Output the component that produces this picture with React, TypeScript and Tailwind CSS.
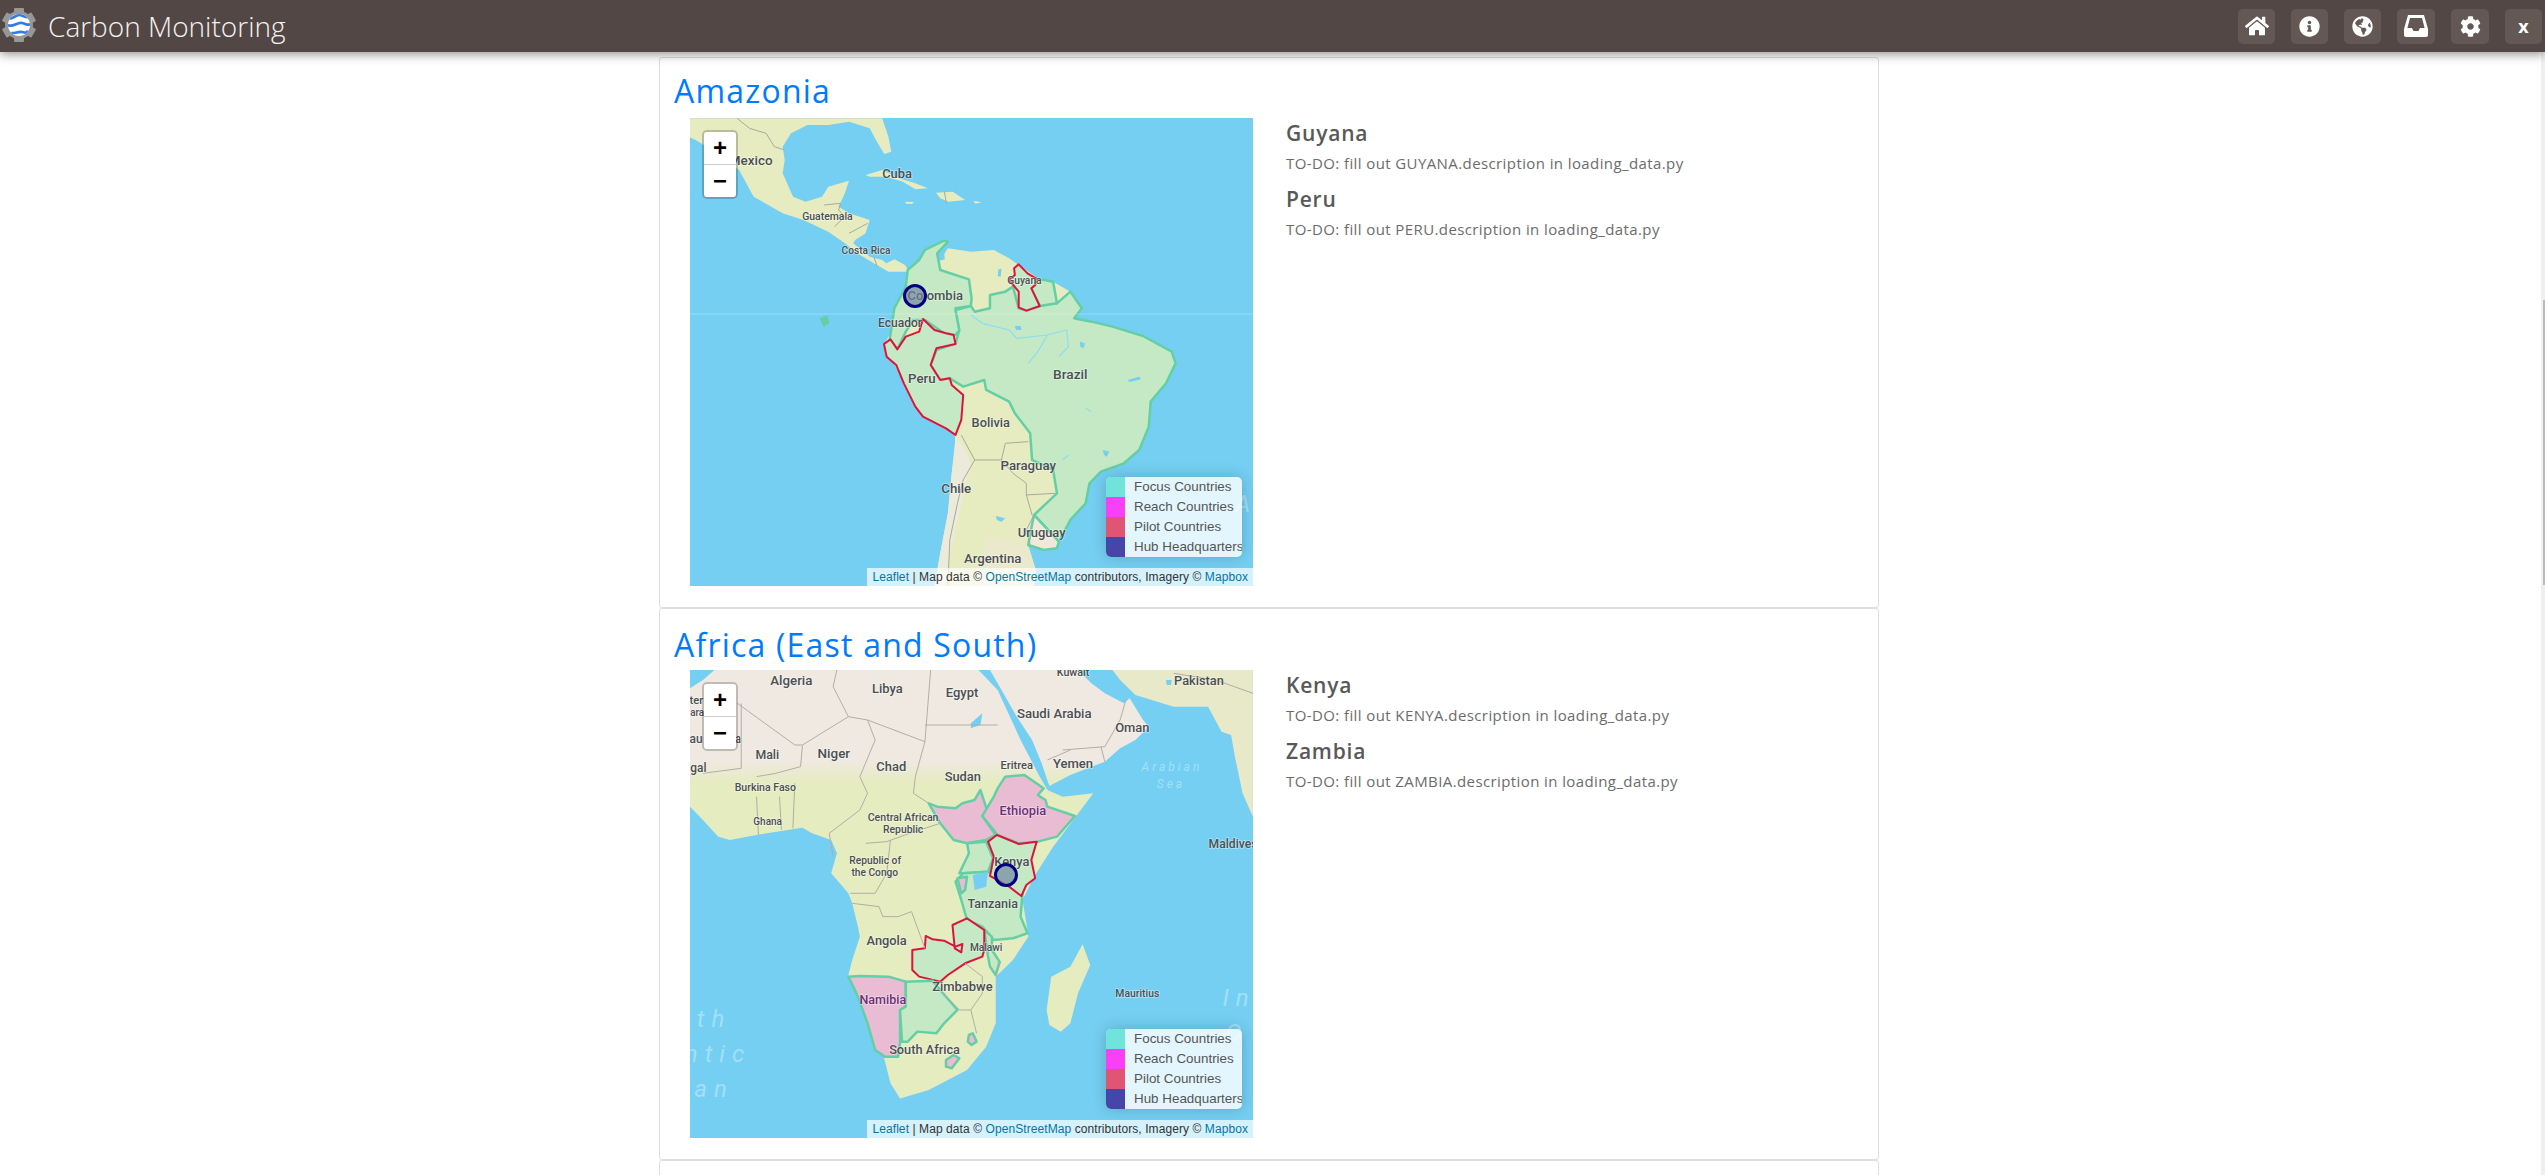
import { FaCog, FaGlobeAmericas, FaHome, FaInfoCircle } from "react-icons/fa";
import type { ReactNode } from "react";

const WATER = "#74cff3";
const GREEN = "#c4e9c4";
const TEAL = "#64cfa5";
const PINK = "#e9bcd4";
const RED = "#dc143c";

type Label = [string, number, number, number, number?];
type Shape = { points: string; fill?: string; stroke?: string; width?: number };

function Logo() {
  return (
    <svg width="36" height="36" viewBox="0 0 36 36" className="ml-px shrink-0">
      <defs>
        <clipPath id="globe">
          <circle cx="18" cy="17" r="11" />
        </clipPath>
      </defs>
      <g fill="#979797">
        <circle cx="18" cy="17" r="14" />
        {[0, 60, 120, 180, 240, 300].map((r) => (
          <rect key={r} x="13" y="0" width="10" height="8" rx="1" transform={`rotate(${r} 18 17)`} />
        ))}
      </g>
      <circle cx="18" cy="17" r="11" fill="#fff" />
      <g clipPath="url(#globe)" fill="none" stroke="#2f7de8" strokeWidth="2.8">
        <path d="M8 10c4 2 7-4 11-3s6 3 9 2" />
        <path d="M6 17c6 3 10-3 15-2s5 3 9 1" />
        <path d="M10 25c4 1 7-2 11-1s4 1 6-1" />
      </g>
    </svg>
  );
}

function InboxIcon() {
  return (
    <svg width="24" height="22" viewBox="0 0 24 22" fill="#fff">
      <path
        fillRule="evenodd"
        d="M4 0h16l4 14v6a2 2 0 0 1-2 2H2a2 2 0 0 1-2-2v-6L4 0Zm2 3L3.4 13H8l1.5 3h5l1.500-3h4.600L18 3H6Z"
      />
    </svg>
  );
}

function HeaderButton({ children, wide }: { children: ReactNode; wide?: boolean }) {
  return (
    <div
      className={`flex h-[35px] items-center justify-center rounded-[5px] bg-[#645855] text-white ${wide ? "w-[38px]" : "w-[37px]"}`}
    >
      {children}
    </div>
  );
}

function Header() {
  return (
    <header className="relative z-10 flex h-[52px] shrink-0 items-center justify-between bg-[#524745] pr-[3px] shadow-[0_2px_10px_rgba(0,0,0,0.45)]">
      <div className="flex items-center gap-[11px]">
        <Logo />
        <span className="text-[28px] leading-none font-light text-[#f4f2f1] [font-family:'Open_Sans',sans-serif]">
          Carbon Monitoring
        </span>
      </div>
      <div className="flex items-center gap-[16px]">
        <HeaderButton>
          <FaHome size={24} />
        </HeaderButton>
        <HeaderButton>
          <FaInfoCircle size={21} />
        </HeaderButton>
        <HeaderButton>
          <FaGlobeAmericas size={21} />
        </HeaderButton>
        <HeaderButton wide>
          <InboxIcon />
        </HeaderButton>
        <HeaderButton wide>
          <FaCog size={21} />
        </HeaderButton>
        <HeaderButton>
          <span className="text-[18px] font-bold [font-family:'Open_Sans',sans-serif]">x</span>
        </HeaderButton>
      </div>
    </header>
  );
}

function Shapes({ shapes, transform }: { shapes: Shape[]; transform: string }) {
  return (
    <g transform={transform}>
      {shapes.map((s, i) => (
        <polygon
          key={i}
          points={s.points}
          fill={s.fill ?? "none"}
          stroke={s.stroke ?? "none"}
          strokeWidth={s.width ?? 2}
          strokeLinejoin="round"
          vectorEffect="non-scaling-stroke"
        />
      ))}
    </g>
  );
}

function Lines({ lines, transform, color, width }: { lines: string[]; transform: string; color: string; width: number }) {
  return (
    <g transform={transform} fill="none" stroke={color} strokeWidth={width} strokeLinejoin="round">
      {lines.map((l, i) => (
        <polyline key={i} points={l} vectorEffect="non-scaling-stroke" />
      ))}
    </g>
  );
}

function Labels({
  labels,
  sx,
  ox,
  oy,
  color = "#4a4f53",
}: {
  labels: Label[];
  sx: number;
  ox: number;
  oy: number;
  color?: string;
}) {
  return (
    <g>
      {labels.map(([text, x, y, w, size], i) => (
        <text
          key={i}
          x={x * sx + ox}
          y={y / 3 + oy}
          textAnchor="middle"
          dominantBaseline="central"
          textLength={w * sx}
          lengthAdjust="spacingAndGlyphs"
          fontSize={size ?? 12}
          fill={color}
          stroke="rgba(255,255,255,0.45)"
          strokeWidth="1.5"
          className="font-medium [font-family:Roboto,sans-serif] [paint-order:stroke]"
        >
          {text}
        </text>
      ))}
    </g>
  );
}

function Faint({ children, x, y, size = 24, gap = "tracking-[7px]" }: { children: string; x: number; y: number; size?: number; gap?: string }) {
  return (
    <text
      x={x}
      y={y}
      textAnchor="middle"
      dominantBaseline="central"
      fontSize={size}
      fill="rgba(255,255,255,0.35)"
      className={`italic [font-family:Roboto,sans-serif] ${gap}`}
    >
      {children}
    </text>
  );
}

// zoom + / - and legend and attribution sit on top of the map
function MapOverlays() {
  const legend = [
    ["#70e4da", "Focus Countries"],
    ["#f940f7", "Reach Countries"],
    ["#e05474", "Pilot Countries"],
    ["#4646a8", "Hub Headquarters"],
  ];
  return (
    <>
      <div className="absolute top-[12px] left-[12px] flex w-[36px] flex-col overflow-hidden rounded-[5px] border-2 border-[rgba(0,0,0,0.2)] bg-clip-padding [font-family:'Liberation_Sans',sans-serif]">
        <div className="flex h-[33px] items-center justify-center border-b border-[#ccc] bg-white text-[24px] leading-none font-bold text-black">
          +
        </div>
        <div className="flex h-[32px] items-center justify-center bg-white text-[24px] leading-none font-bold text-black">
          −
        </div>
      </div>
      <div className="absolute right-[11px] bottom-[29px] w-[136px] overflow-hidden rounded-[5px] bg-[rgba(255,255,255,0.8)] text-[13.4px] leading-[20px] text-[#555] shadow-[0_0_15px_rgba(0,0,0,0.2)] [font-family:'Liberation_Sans',sans-serif]">
        {legend.map(([color, name]) => (
          <div key={name} className="flex h-[20px] items-center whitespace-nowrap">
            <span className="h-[20px] w-[19px] shrink-0" style={{ backgroundColor: color }} />
            <span className="ml-[9px]">{name}</span>
          </div>
        ))}
      </div>
      <div className="absolute right-0 bottom-0 h-[18px] whitespace-nowrap bg-[rgba(255,255,255,0.7)] px-[5px] text-[12px] leading-[18px] tracking-[0.08px] text-[#333] [font-family:'Liberation_Sans',sans-serif]">
        <span className="text-[#0078a8]">Leaflet</span> | Map data © <span className="text-[#0078a8]">OpenStreetMap</span>{" "}
        contributors, Imagery © <span className="text-[#0078a8]">Mapbox</span>
      </div>
    </>
  );
}

function Marker({ x, y }: { x: number; y: number }) {
  return <circle cx={x} cy={y} r="10.5" fill="#6e7fa0" fillOpacity="0.65" stroke="#000080" strokeWidth="3" />;
}

function AmazonMap() {
  const upper = "translate(-40 -68) scale(0.4146 0.3333)";
  const lower = "translate(-10 102) scale(0.3827 0.3333)";
  return (
    <svg viewBox="0 0 563 468" width="563" height="468" className="block">
      <rect width="563" height="468" fill={WATER} />
      <Shapes
        transform={upper}
        shapes={[
          {
            fill: "#e6ecc0",
            points:
              "96,205 560,205 575,260 582,305 565,312 545,270 530,235 480,215 430,225 380,225 340,250 320,290 325,330 320,370 345,440 375,455 415,440 430,410 480,392 470,430 455,470 480,490 530,510 520,550 495,570 490,580 530,620 560,630 570,640 590,628 615,645 625,665 575,665 540,640 500,610 470,580 430,545 370,510 320,490 250,440 215,360 150,300 110,270 96,262",
          },
          { fill: "#e6ecc0", points: "520,375 560,360 600,385 640,400 670,415 640,418 610,395 570,380 530,380" },
          { fill: "#e6ecc0", points: "690,428 730,425 760,450 720,455 700,445" },
          { fill: "#e6ecc0", points: "615,455 637,456 632,462 618,461" },
          { fill: "#e6ecc0", points: "780,452 800,457 785,461" },
        ]}
      />
      <Lines
        transform={upper}
        color="#a9a99a"
        width={1}
        lines={[
          "210,205 240,235 280,250 300,290 325,300",
          "420,465 460,460 455,480 470,500 445,530",
          "480,550 510,530 525,520",
          "540,620 548,650",
          "710,425 715,460",
        ]}
      />
      <Shapes
        transform={lower}
        shapes={[
          {
            fill: "#e6ecc0",
            points:
              "595,150 625,120 640,90 690,62 672,100 680,120 700,85 760,95 820,90 860,115 885,135 930,170 975,185 1020,215 1050,265 1030,295 1075,305 1130,320 1210,348 1285,395 1295,430 1270,490 1230,545 1225,620 1200,690 1160,730 1100,755 1070,790 1060,850 1020,900 990,965 985,985 950,990 910,975 930,1050 925,1098 665,1098 680,1000 700,880 710,760 720,680 718,645 700,620 640,590 615,560 585,480 550,415 535,370 550,340 560,260 590,200",
          },
          {
            fill: "#eceadb",
            points: "720,650 745,690 760,730 735,850 705,1000 690,1098 665,1098 680,1000 700,880 710,760",
          },
          { fill: "#ebe9cc", points: "800,950 900,960 930,1050 925,1098 780,1098" },
          { fill: WATER, points: "672,100 690,95 692,118 678,122" },
          {
            fill: GREEN,
            stroke: TEAL,
            width: 2.5,
            points:
              "595,150 625,120 640,90 690,62 700,65 672,100 680,150 755,178 762,235 760,258 720,265 730,330 720,345 690,340 640,300 610,300 590,335 568,388 548,358 560,265 590,200",
          },
          {
            fill: GREEN,
            stroke: TEAL,
            width: 2.5,
            points:
              "760,258 770,275 810,265 810,225 850,215 870,200 885,265 905,272 940,258 975,250 985,250 1020,215 1050,265 1030,295 1075,305 1130,320 1210,348 1285,395 1295,430 1270,490 1230,545 1225,620 1200,690 1160,730 1100,755 1070,790 1060,850 1020,900 990,965 925,885 985,820 975,750 920,720 915,640 875,580 860,545 800,510 795,480 740,500 705,475 680,480 655,435 670,390 720,370 730,330 720,270",
          },
          { fill: GREEN, stroke: TEAL, width: 2.5, points: "930,175 975,185 985,250 940,258 918,205 928,195" },
          {
            fill: "#f0e8d8",
            stroke: TEAL,
            width: 2.5,
            points: "925,885 990,965 985,985 950,990 910,975 918,925",
          },
          {
            fill: GREEN,
            stroke: RED,
            width: 2,
            points:
              "635,297 665,330 695,340 715,345 720,372 670,385 655,435 680,480 705,475 710,495 740,525 735,600 720,645 695,625 635,590 615,560 585,490 565,435 540,410 533,372 550,358 568,388 590,350 625,335",
          },
          {
            fill: GREEN,
            stroke: RED,
            width: 2,
            points: "885,133 908,160 930,175 928,195 918,205 940,258 905,272 885,262 885,215 860,180 875,165 873,145",
          },
          { fill: WATER, points: "832,148 840,146 838,170 830,168" },
          { fill: WATER, points: "1170,480 1200,470 1205,478 1175,486" },
          { fill: WATER, points: "1105,690 1122,695 1115,710 1108,705" },
          { fill: WATER, points: "825,888 850,895 840,905 828,900" },
          { fill: WATER, points: "1045,365 1058,370 1055,385 1046,380" },
          { fill: WATER, points: "875,318 890,318 892,330 878,330" },
          { fill: TEAL, points: "365,295 385,285 390,310 375,320" },
        ]}
      />
      <Lines
        transform={lower}
        color="#8fdcf2"
        width={1.2}
        lines={[
          "760,285 790,310 860,330 880,355 960,345 1010,330",
          "960,345 935,395 910,430",
          "1010,330 1015,380 990,410",
          "1060,565 1075,575",
          "1000,720 1015,705",
        ]}
      />
      <Lines
        transform={lower}
        color="#a9a99a"
        width={1}
        lines={[
          "735,645 770,720 740,780 725,850 705,960 700,1098",
          "770,720 840,720 850,670 910,665",
          "840,720 870,760 905,790 905,825 980,820",
          "905,825 920,885",
          "915,975 905,930 925,885",
        ]}
      />
      <line x1="0" y1="196" x2="563" y2="196" stroke="#fff" strokeOpacity="0.25" />
      <Labels
        sx={0.4146}
        ox={-40}
        oy={-68}
        labels={[
          ["Mexico", 243, 332, 106, 12.5],
          ["Cuba", 596, 372, 72, 12],
          ["Guatemala", 428, 499, 122, 10],
          ["Costa Rica", 521, 601, 118, 10],
        ]}
      />
      <Labels
        sx={0.3827}
        ox={-10}
        oy={102}
        labels={[
          ["Colombia", 667, 226, 145, 12.5],
          ["Guyana", 900, 180, 90, 10.5],
          ["Ecuador", 575, 306, 115, 12.5],
          ["Peru", 632, 475, 72, 12.5],
          ["Brazil", 1020, 464, 90, 13],
          ["Bolivia", 812, 607, 100, 13],
          ["Paraguay", 910, 735, 145, 13],
          ["Chile", 722, 806, 78, 13],
          ["Uruguay", 945, 937, 125, 13],
          ["Argentina", 817, 1015, 150, 13],
        ]}
      />
      <Faint x={556} y={386}>
        A
      </Faint>
      <Marker x={225} y={178} />
    </svg>
  );
}

function AfricaMap() {
  const t = "translate(-10 -10) scale(0.3827 0.3333)";
  return (
    <svg viewBox="0 0 563 468" width="563" height="468" className="block">
      <defs>
        <linearGradient id="sahel" gradientUnits="userSpaceOnUse" x1="0" y1="300" x2="0" y2="370">
          <stop offset="0" stopColor="#efe9e2" />
          <stop offset="1" stopColor="#e5ecc0" />
        </linearGradient>
      </defs>
      <rect width="563" height="468" fill={WATER} />
      <Shapes
        transform={t}
        shapes={[
          {
            fill: "url(#sahel)",
            points:
              "90,30 780,30 830,90 890,240 940,350 960,390 1000,410 1080,400 975,560 925,650 895,720 905,790 910,830 870,900 825,950 825,1000 825,1090 800,1160 750,1230 650,1290 575,1316 550,1270 530,1180 510,1100 470,1010 440,945 450,900 470,830 465,800 450,730 440,700 395,640 410,580 395,540 345,520 320,503 200,525 130,540 100,530 60,480 26,440 26,85 60,60",
          },
          {
            fill: "url(#sahel)",
            points:
              "810,30 1040,30 1075,70 1110,100 1160,130 1175,115 1210,180 1225,200 1190,240 1150,265 1110,305 1020,345 965,378 945,310 920,240 880,170 830,70",
          },
          {
            fill: "#e8e9c8",
            points: "1130,30 1497,30 1497,470 1470,400 1450,290 1440,225 1415,215 1380,140 1290,140 1190,105 1150,60",
          },
          {
            fill: "#e5ecc0",
            points: "1052,853 1072,915 1040,1000 1020,1090 995,1115 965,1095 958,1050 970,950 1020,920",
          },
          { fill: WATER, points: "760,190 790,160 785,195 760,205" },
          { fill: WATER, points: "1270,60 1285,60 1283,75 1272,75" },
          {
            fill: PINK,
            stroke: TEAL,
            width: 2.5,
            points: "650,430 672,440 720,445 738,430 770,420 785,390 805,460 790,468 825,525 800,540 750,550 715,540 680,490",
          },
          {
            fill: PINK,
            stroke: TEAL,
            width: 2.5,
            points:
              "850,350 900,345 950,385 935,405 955,420 960,440 1032,468 985,530 935,545 885,550 830,525 790,468 820,410 830,385",
          },
          { fill: GREEN, stroke: TEAL, width: 2.5, points: "750,550 800,545 818,595 805,635 740,640 730,640 755,580" },
          {
            fill: GREEN,
            stroke: TEAL,
            width: 2.5,
            points: "740,640 805,635 895,700 890,770 908,820 870,835 820,840 790,800 750,780 735,720 720,665",
          },
          { fill: PINK, stroke: TEAL, width: 2.5, points: "725,655 750,650 745,690 735,700" },
          { fill: WATER, points: "765,645 805,635 800,680 770,690" },
          { fill: GREEN, stroke: TEAL, width: 2.5, points: "795,810 815,830 815,870 835,905 825,945 810,920 805,890" },
          {
            fill: GREEN,
            stroke: RED,
            width: 2,
            points:
              "712,795 750,775 795,810 795,870 790,890 745,910 700,945 680,965 625,950 607,930 607,870 640,865 642,828 660,838 690,842 720,860 738,852 735,877 718,865",
          },
          {
            fill: GREEN,
            stroke: RED,
            width: 2,
            points: "828,525 885,552 932,545 918,600 928,655 905,675 892,708 860,680 810,648 820,590 805,545",
          },
          {
            fill: PINK,
            stroke: TEAL,
            width: 2.5,
            points: "440,950 470,948 545,950 590,965 590,1040 575,1050 575,1150 570,1190 535,1190 510,1170 490,1090 465,1010",
          },
          {
            fill: GREEN,
            stroke: TEAL,
            width: 2.5,
            points: "590,965 660,962 680,990 725,1050 690,1090 670,1120 620,1115 595,1145 580,1145 575,1050 590,1040",
          },
          { fill: PINK, stroke: TEAL, width: 2.5, points: "695,1200 715,1185 730,1195 710,1225 695,1220" },
          { fill: PINK, stroke: TEAL, width: 2.5, points: "755,1125 765,1120 775,1145 762,1155 752,1145" },
        ]}
      />
      <Lines
        transform={t}
        color="#b3aea5"
        width={1}
        lines={[
          "150,130 300,255 320,255 440,170 490,180",
          "410,30 400,80 440,170",
          "490,180 640,245 655,30",
          "640,195 830,195",
          "640,245 615,350 610,400 650,430",
          "490,180 510,240 470,350 490,400 470,450",
          "320,255 315,320 250,340 200,350",
          "160,130 160,325 60,340",
          "200,410 205,525",
          "260,410 265,510",
          "300,370 295,505",
          "470,450 390,520 400,590",
          "485,550 540,545 600,520 680,490",
          "550,540 540,640 510,700 445,700",
          "450,730 520,740 530,770 570,770 605,755 640,865",
          "1000,270 1110,260 1150,180 1165,120",
          "960,300 1020,270",
          "1100,260 1110,305",
          "1497,100 1400,60 1290,40",
          "680,990 730,1050 760,1050 790,1000 790,950 745,910",
          "760,1050 775,1120",
          "825,950 838,905",
        ]}
      />
      <Labels
        sx={0.3827}
        ox={-10}
        oy={-10}
        labels={[
          ["Kuwait", 1027, 38, 85, 11],
          ["Algeria", 291, 62, 110, 13],
          ["Libya", 542, 85, 80, 13],
          ["Egypt", 737, 97, 85, 13],
          ["Pakistan", 1356, 60, 130, 13],
          ["Saudi Arabia", 978, 160, 195, 13],
          ["Oman", 1182, 202, 90, 13],
          ["ter", 43, 120, 36, 11],
          ["ara", 45, 157, 36, 11],
          ["au", 42, 235, 34, 13],
          ["a", 152, 235, 14, 13],
          ["Mali", 228, 282, 62, 13],
          ["Niger", 402, 281, 85, 13],
          ["Chad", 552, 320, 78, 13],
          ["Sudan", 739, 350, 95, 13],
          ["Eritrea", 880, 316, 85, 11],
          ["Yemen", 1027, 310, 105, 13],
          ["gal", 48, 323, 42, 13],
          ["Burkina Faso", 223, 382, 160, 11],
          ["Ghana", 229, 485, 75, 11],
          ["Central African", 583, 473, 185, 11],
          ["Republic", 583, 509, 105, 11],
          ["Republic of", 510, 602, 135, 11],
          ["the Congo", 509, 637, 122, 11],
          ["Kenya", 867, 603, 92, 12.5],
          ["Tanzania", 817, 729, 132, 12.5],
          ["Angola", 540, 840, 105, 13],
          ["Malawi", 800, 863, 85, 11],
          ["Zimbabwe", 738, 978, 158, 13],
          ["South Africa", 639, 1167, 185, 12.5],
          ["Maldives", 1445, 553, 128, 12],
          ["Mauritius", 1195, 1000, 115, 10],
        ]}
      />
      <Labels
        sx={0.3827}
        ox={-10}
        oy={-10}
        color="#6b2f78"
        labels={[
          ["Ethiopia", 896, 451, 122, 13],
          ["Namibia", 530, 1018, 122, 13],
        ]}
      />
      <Faint x={482} y={97} size={12} gap="tracking-[3px]">
        Arabian
      </Faint>
      <Faint x={481} y={114} size={12} gap="tracking-[3px]">
        Sea
      </Faint>
      <Faint x={24} y={349}>
        th
      </Faint>
      <Faint x={28} y={384}>
        ntic
      </Faint>
      <Faint x={24} y={419}>
        an
      </Faint>
      <Faint x={549} y={328}>
        In
      </Faint>
      <Faint x={547} y={363}>
        O
      </Faint>
      <Marker x={316} y={205} />
    </svg>
  );
}

function Country({ name, code }: { name: string; code: string }) {
  return (
    <div>
      <h5 className="text-[21px] leading-[30px] font-semibold tracking-[0.8px] text-[#595959]">{name}</h5>
      <p className="mt-[5px] mb-[10px] text-[15px] leading-[21px] tracking-[0.4px] text-[#6c6c6c]">
        TO-DO: fill out {code}.description in loading_data.py
      </p>
    </div>
  );
}

function HubCard({ title, map, tall, children }: { title: string; map: ReactNode; tall?: boolean; children: ReactNode }) {
  return (
    <section
      className={`rounded-[3px] border border-[#ddd] px-[14px] [font-family:'Open_Sans',sans-serif] ${tall ? "h-[552px]" : "h-[551px]"}`}
    >
      <h2
        className={`text-[32px] leading-[46px] font-medium tracking-[1.2px] text-[#007bff] ${tall ? "h-[61px] pt-[13px]" : "h-[60px] pt-[10px]"}`}
      >
        {title}
      </h2>
      <div className="flex pl-[16px]">
        <div className="relative h-[468px] w-[563px] shrink-0 overflow-hidden">
          {map}
          <MapOverlays />
        </div>
        <div className="ml-[32px] pl-px">{children}</div>
      </div>
    </section>
  );
}

export default function App() {
  return (
    <div className="flex h-[1175px] flex-col overflow-hidden bg-white">
      <Header />
      <div className="flex min-h-0 flex-1">
        <main className="min-w-0 flex-1 overflow-hidden pt-[5px] pr-[3px]">
          <div className="mx-auto flex w-[1220px] flex-col">
            <HubCard title="Amazonia" map={<AmazonMap />}>
              <Country name="Guyana" code="GUYANA" />
              <Country name="Peru" code="PERU" />
            </HubCard>
            <HubCard title="Africa (East and South)" map={<AfricaMap />} tall>
              <Country name="Kenya" code="KENYA" />
              <Country name="Zambia" code="ZAMBIA" />
            </HubCard>
            <div className="h-[100px] rounded-[3px] border border-[#ddd]" />
          </div>
        </main>
        <div className="w-[4px] shrink-0 bg-[#efefef]">
          <div className="mt-[248px] ml-[2px] h-[285px] w-[2px] bg-[#bbb]" />
        </div>
      </div>
    </div>
  );
}
